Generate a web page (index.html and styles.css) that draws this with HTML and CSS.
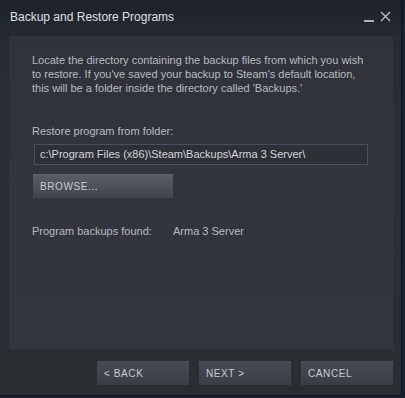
FILE: index.html
```html
<!DOCTYPE html>
<html lang="en">
<head>
  <meta charset="UTF-8">
  <title>Backup and Restore Programs</title>
  <link rel="stylesheet" href="styles.css">
</head>
<body>
  <div class="window">
    <header class="titlebar">
      <span class="title">Backup and Restore Programs</span>
      <div class="controls">
        <svg class="ctl-min" width="10" height="10" viewBox="0 0 10 10"><rect x="0" y="7" width="10" height="2" fill="#aeb2b8"/></svg>
        <svg class="ctl-close" width="11" height="11" viewBox="0 0 11 11"><path d="M1 1 L10 10 M10 1 L1 10" stroke="#b9bdc2" stroke-width="1.4"/></svg>
      </div>
    </header>

    <main class="panel">
      <p class="intro">Locate the directory containing the backup files from which you wish to restore. If you've saved your backup to Steam's default location, this will be a folder inside the directory called 'Backups.'</p>
      <div class="field-label">Restore program from folder:</div>
      <div class="path-input">c:\Program Files (x86)\Steam\Backups\Arma 3 Server\</div>
      <button class="btn browse">Browse...</button>
      <div class="found">
        <span class="found-label">Program backups found:</span>
        <span>Arma 3 Server</span>
      </div>
    </main>

    <footer class="footer">
      <button class="btn nav">&lt; Back</button>
      <button class="btn nav">Next &gt;</button>
      <button class="btn nav">Cancel</button>
    </footer>
  </div>
</body>
</html>
```

FILE: styles.css
```css
body {
  margin: 0;
  background: #1b2030;
  font-family: 'Liberation Sans', Arial, sans-serif;
  font-size: 11px;
  color: #b8bcc2;
}
.window {
  width: 401px;
  height: 395px;
  border-right: 1px solid #111316;
  border-bottom: 1px solid #111316;
  background: linear-gradient(#1d222b 0, #262a31 40px, #2b2e34 120px, #2a2d32 100%);
  display: flex;
  flex-direction: column;
}
.titlebar {
  height: 36px;
  box-sizing: border-box;
  padding: 10px 0 0 10px;
  display: flex;
  align-items: flex-start;
}
.title {
  font-size: 12px;
  line-height: 14px;
  color: #dde0e4;
}
.controls {
  margin-left: auto;
  margin-right: 10px;
  display: flex;
  align-items: flex-start;
  gap: 6px;
  padding-top: 1px;
}
.ctl-min {
  margin-top: 2px;
}
.panel {
  margin-left: 9px;
  width: 384px;
  height: 313px;
  box-sizing: border-box;
  padding: 17px 23px;
  background: linear-gradient(#2f3238, #33363d);
}
.intro {
  margin: 0;
  line-height: 14px;
}
.field-label {
  margin-top: 29px;
  line-height: 14px;
}
.path-input {
  margin: 6px 0 0 2px;
  width: 334px;
  height: 21px;
  box-sizing: border-box;
  border: 1px solid #4a505d;
  padding-left: 5px;
  line-height: 19px;
  color: #d4d7db;
  background: #2d3036;
}
.btn {
  display: block;
  border: none;
  height: 24px;
  padding: 0 0 0 7px;
  text-align: left;
  font-family: inherit;
  font-size: 10px;
  letter-spacing: 0.6px;
  text-transform: uppercase;
  color: #c9ccd1;
  cursor: pointer;
}
.browse {
  margin: 9px 0 0 1px;
  width: 140px;
  background: linear-gradient(#5a5f69, #3f434b);
}
.found {
  margin-top: 26px;
  display: flex;
  line-height: 14px;
}
.found-label {
  width: 141px;
}
.footer {
  margin-top: 12px;
  padding-right: 8px;
  display: flex;
  justify-content: flex-end;
  gap: 10px;
}
.nav {
  width: 92px;
  background: linear-gradient(#484c56, #393c44);
}
```
